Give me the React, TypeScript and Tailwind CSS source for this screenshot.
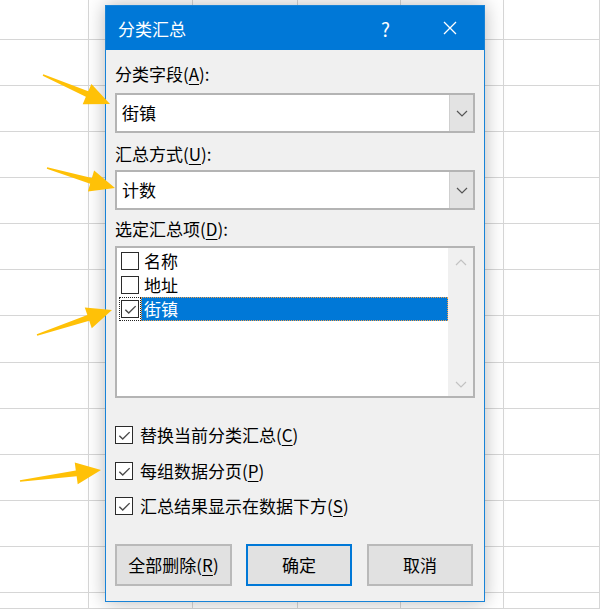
import type { ReactNode } from 'react';

const font = { fontFamily: '"Noto Sans CJK SC", "Noto Sans", sans-serif' };

const arrows: [number, number, number, number][] = [
  [43, 75, 110, 104],
  [47, 168, 115, 188],
  [37, 335, 112, 310],
  [20, 481, 101, 470],
];

function arrowPoints(tx: number, ty: number, px: number, py: number) {
  const len = Math.hypot(px - tx, py - ty);
  const dx = (px - tx) / len;
  const dy = (py - ty) / len;
  const nx = -dy;
  const ny = dx;
  const bx = px - dx * 25;
  const by = py - dy * 25;
  const pts = [
    [tx + nx * 0.8, ty + ny * 0.8],
    [bx + nx * 3, by + ny * 3],
    [bx + nx * 11, by + ny * 11],
    [px, py],
    [bx - nx * 11, by - ny * 11],
    [bx - nx * 3, by - ny * 3],
    [tx - nx * 0.8, ty - ny * 0.8],
  ];
  return pts.map((p) => p.join(',')).join(' ');
}

function Key({ k }: { k: string }) {
  return <span className="underline underline-offset-[3px] decoration-1">{k}</span>;
}

function Check({ checked }: { checked: boolean }) {
  return (
    <span className="flex h-[18px] w-[18px] shrink-0 items-center justify-center border-[1.5px] border-[#2b2b2b] bg-white">
      {checked && (
        <svg viewBox="0 0 16 16" className="h-[15px] w-[15px]">
          <path d="M2.5 8.2l3.6 3.6 7.4-7.4" stroke="#4a4a4a" strokeWidth="1.5" fill="none" />
        </svg>
      )}
    </span>
  );
}

function Chevron({ up, color }: { up?: boolean; color: string }) {
  return (
    <svg viewBox="0 0 12 7" className="h-[7px] w-[12px]">
      <path d={up ? 'M1 6l5-5 5 5' : 'M1 1l5 5 5-5'} stroke={color} strokeWidth="1.2" fill="none" />
    </svg>
  );
}

function Combo({ value }: { value: string }) {
  return (
    <div className="flex h-[40px] border-2 border-[#b4b4b4] bg-white">
      <div className="flex flex-1 items-center pl-[5px] text-[17px] text-black">{value}</div>
      <div className="flex w-[24px] items-center justify-center border-l border-[#cfcfcf] bg-[#e3e3e3]">
        <Chevron color="#555" />
      </div>
    </div>
  );
}

function Option({ label }: { label: ReactNode }) {
  return (
    <div className="flex h-[20px] items-center gap-[7px] text-[17px] leading-[20px] text-black">
      <Check checked />
      <span>{label}</span>
    </div>
  );
}

function Btn({ children, primary, w }: { children: ReactNode; primary?: boolean; w: string }) {
  return (
    <button
      className={
        'flex h-[42px] items-center justify-center border-2 bg-[#e1e1e1] text-[17px] text-black ' +
        w +
        (primary ? ' border-[#0078d7]' : ' border-[#b9b9b9]')
      }
    >
      {children}
    </button>
  );
}

export default function App() {
  return (
    <div className="relative h-[609px] w-[600px] overflow-hidden bg-white" style={font}>
      {/* sheet behind the dialog */}
      <div className="grid h-full w-full grid-cols-[89px_104px_105px_103px_103px_1fr] grid-rows-[40px_repeat(6,46px)_47px_repeat(5,46px)_1fr]">
        {Array.from({ length: 84 }).map((_, i) => (
          <div key={i} className="border-b border-r border-[#d6d6d6]" />
        ))}
      </div>

      {/* dialog */}
      <div className="absolute left-[105px] top-[5px] flex h-[597px] w-[380px] flex-col border border-[#1883d7] bg-[#f0f0f0] shadow-[0_0_18px_rgba(0,0,0,0.28)]">
        <div className="flex h-[44px] shrink-0 items-center bg-[#0078d7] pl-[12px] text-white">
          <span className="text-[17px] leading-none">分类汇总</span>
          <span className="ml-auto mr-[53px] text-[19px] leading-none">?</span>
          <svg viewBox="0 0 14 14" className="mr-[27px] h-[14px] w-[14px]">
            <path d="M1 1l12 12M13 1L1 13" stroke="#fff" strokeWidth="1.3" />
          </svg>
        </div>

        <div className="flex flex-1 flex-col px-[9px] pt-[14px] text-[17px] text-black">
          <div className="h-[20px] leading-[20px]">
            分类字段(<Key k="A" />):
          </div>
          <div className="mt-[9px]">
            <Combo value="街镇" />
          </div>
          <div className="mt-[11px] h-[20px] leading-[20px]">
            汇总方式(<Key k="U" />):
          </div>
          <div className="mt-[6px]">
            <Combo value="计数" />
          </div>
          <div className="mt-[9px] h-[20px] leading-[20px]">
            选定汇总项(<Key k="D" />):
          </div>

          <div className="mt-[7px] flex h-[152px] border-2 border-[#b4b4b4] bg-white">
            <div className="flex flex-1 flex-col pt-[1px]">
              <div className="flex h-[24px] items-center">
                <span className="ml-[2px] flex h-[24px] w-[22px] items-center justify-center">
                  <Check checked={false} />
                </span>
                <span className="pl-[3px] leading-[20px]">名称</span>
              </div>
              <div className="flex h-[24px] items-center">
                <span className="ml-[2px] flex h-[24px] w-[22px] items-center justify-center">
                  <Check checked={false} />
                </span>
                <span className="pl-[3px] leading-[20px]">地址</span>
              </div>
              <div className="flex h-[24px] items-center">
                <span className="ml-[2px] flex h-[24px] w-[22px] items-center justify-center border border-dotted border-[#222]">
                  <Check checked />
                </span>
                <span className="flex h-[24px] flex-1 items-center border border-dotted border-[#f2a04a] bg-[#0078d7] pl-[2px] leading-[20px] text-white">
                  街镇
                </span>
              </div>
            </div>
            <div className="flex w-[25px] flex-col items-center justify-between bg-[#f0f0f0] pb-[8px] pt-[11px]">
              <Chevron up color="#c2c2c2" />
              <Chevron color="#c2c2c2" />
            </div>
          </div>

          <div className="mt-[27px]">
            <Option
              label={
                <>
                  替换当前分类汇总(<Key k="C" />)
                </>
              }
            />
          </div>
          <div className="mt-[16px]">
            <Option
              label={
                <>
                  每组数据分页(<Key k="P" />)
                </>
              }
            />
          </div>
          <div className="mt-[15px]">
            <Option
              label={
                <>
                  汇总结果显示在数据下方(<Key k="S" />)
                </>
              }
            />
          </div>

          <div className="mt-[28px] flex items-center">
            <Btn w="w-[117px]">
              全部删除(<Key k="R" />)
            </Btn>
            <Btn w="ml-[14px] w-[106px]" primary>
              确定
            </Btn>
            <Btn w="ml-[15px] w-[106px]">取消</Btn>
          </div>
        </div>
      </div>

      {/* callout arrows */}
      <svg className="pointer-events-none absolute inset-0" width="600" height="609">
        {arrows.map(([tx, ty, px, py], i) => (
          <polygon key={i} points={arrowPoints(tx, ty, px, py)} fill="#ffc107" />
        ))}
      </svg>
    </div>
  );
}
